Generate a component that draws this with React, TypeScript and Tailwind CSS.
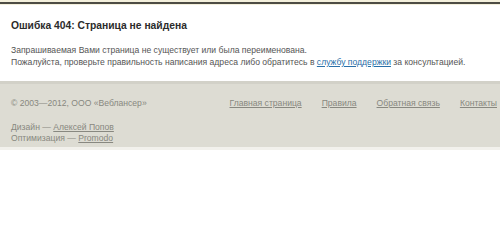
export default function App() {
  return (
    <div className="min-h-[243px] bg-white font-['Liberation_Sans',sans-serif]">
      <div className="h-[2px] bg-[#f4f0dc]" />
      <div className="h-[2px] bg-[#4d4c44]" />
      <div className="h-px bg-[#f4f0dc]" />
      <div className="px-[11px] pt-[14px] pb-[13px]">
        <h1 className="text-[10.3px] font-bold leading-[14px] text-[#2b2b2b]">Ошибка 404: Страница не найдена</h1>
        <p className="mt-[11px] text-[8.6px] leading-[12px] text-[#555]">
          Запрашиваемая Вами страница не существует или была переименована.
          <br />
          Пожалуйста, проверьте правильность написания адреса либо обратитесь в{' '}
          <a href="#" className="text-[#2a6fa8] underline">службу поддержки</a> за консультацией.
        </p>
      </div>
      <footer className="border-t-[3px] border-[#d2d1c8] bg-[#dddcd3] pl-[11px] pr-[3px] pt-[14px] pb-[3px] text-[8.6px] leading-[11px] text-[#888880]">
        <div className="flex justify-between">
          <span>© 2003—2012, ООО «Веблансер»</span>
          <nav className="flex gap-[20px]">
            <a href="#" className="underline">Главная страница</a>
            <a href="#" className="underline">Правила</a>
            <a href="#" className="underline">Обратная связь</a>
            <a href="#" className="underline">Контакты</a>
          </nav>
        </div>
        <div className="mt-[13px]">
          Дизайн — <a href="#" className="underline">Алексей Попов</a>
          <br />
          Оптимизация — <a href="#" className="underline">Promodo</a>
        </div>
      </footer>
      <div className="h-[3px] bg-[#f2f1ec]" />
    </div>
  )
}
